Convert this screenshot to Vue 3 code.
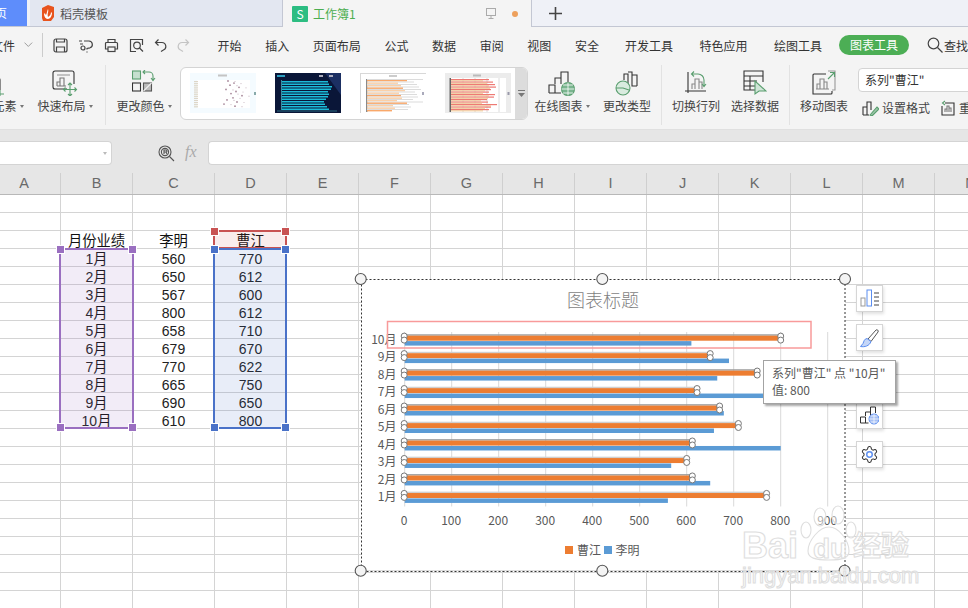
<script setup>
const months = ['1月', '2月', '3月', '4月', '5月', '6月', '7月', '8月', '9月', '10月']
const liming = [560, 650, 567, 800, 658, 679, 770, 665, 690, 610]
const caojiang = [770, 612, 600, 612, 710, 670, 622, 750, 650, 800]

const columns = ['A', 'B', 'C', 'D', 'E', 'F', 'G', 'H', 'I', 'J', 'K', 'L', 'M', 'N']

// sheet cells, row by row, so the table sits in the real grid
const rows = []
for (let r = 0; r < 23; r++) {
  const cells = columns.map(() => null)
  if (r === 2) {
    cells[1] = { cjk: '月份业绩' }
    cells[2] = { cjk: '李明' }
    cells[3] = { cjk: '曹江' }
  }
  if (r > 2 && r < 13) {
    const i = r - 3
    cells[1] = { num: String(i + 1), cjk: '月' }
    cells[2] = { num: String(liming[i]) }
    cells[3] = { num: String(caojiang[i]) }
  }
  rows.push(cells)
}

const X0 = 404.7
const xOf = v => X0 + v * 0.47
const bars = months.map((m, i) => {
  const top = 335.7 + 17.48 * (9 - i)
  return { m, top, a: xOf(caojiang[i]), b: xOf(liming[i]), dark: i % 2 === 1 }
})
const ticks = [0, 100, 200, 300, 400, 500, 600, 700, 800, 900]

const thumbA = [38, 44, 40, 49, 36, 46, 41, 52, 43, 37, 47, 34, 45]
const thumbB = [46, 47, 50, 49, 46, 47, 46, 44, 42, 43, 45, 47]
const thumbC = [46, 37, 40, 42, 44, 38, 40, 41, 36, 46, 32, 34, 31]
const thumbD = [36, 40, 42, 43, 38, 36, 42, 41, 34, 35, 44, 38, 36]

const handles = [
  [360.7, 279], [602.3, 279], [845, 279],
  [360.7, 570.7], [602.3, 570.7], [844.6, 570.7]
]
</script>

<template>
  <div class="page">
    <div class="tabs">
      <div class="tab-home"><span>页</span></div>
      <div class="tab-doc">
        <svg width="14" height="16" viewBox="0 0 14 16"><path d="M1 3l6-3 6 2v10l-3 4H2l-1-3z" fill="#e8541e"/><path d="M7 4c1 3-1 4 0 8 2-1 3-3 3-5l1 1c0 3-2 6-4 6s-4-2-4-5l1-1c0 1 1 2 1 2 1-2 1-4 2-6z" fill="#fff"/></svg>
        <span>稻壳模板</span>
      </div>
      <div class="tab-active">
        <div class="s-logo">S</div>
        <span class="book">工作簿1</span>
        <svg class="monitor" width="12" height="13" viewBox="0 0 12 13" fill="none" stroke="#aaa"><rect x="1.5" y="1.5" width="9" height="7" /><path d="M6 9v2.5M3.5 11.5h5"/></svg>
        <i class="dot"></i>
      </div>
      <div class="plus">
        <svg width="13" height="13" viewBox="0 0 13 13"><path d="M6.5 0v13M0 6.5h13" stroke="#444" stroke-width="1.6"/></svg>
      </div>
    </div>

    <div class="menu">
      <span class="file">文件</span>
      <svg class="chev" width="9" height="6" viewBox="0 0 9 6" fill="none" stroke="#999"><path d="M.5.5l4 4 4-4"/></svg>
      <i class="menu-sep"></i>
      <div class="quick">
        <svg width="15" height="15" viewBox="0 0 15 15" fill="none" stroke="#444" stroke-width="1.2"><rect x="1" y="1" width="13" height="13" rx="2"/><path d="M3.500 1v3h8V1M3.500 14V9h8v5"/></svg>
        <svg width="16" height="15" viewBox="0 0 16 15" fill="none" stroke="#444" stroke-width="1.2"><path d="M6 3h5a3.500 3.500 0 0 1 1 6.800l-3 .7v1M1 3h3M2 6h3M9 13.500v1"/><circle cx="5" cy="10" r="2"/></svg>
        <svg width="15" height="15" viewBox="0 0 15 15" fill="none" stroke="#444" stroke-width="1.2"><path d="M4 5V1.500h7V5M4 11H1.500V5.500a1 1 0 0 1 1-1h10a1 1 0 0 1 1 1V11H11"/><rect x="4" y="9" width="7" height="4.500"/></svg>
        <svg width="15" height="15" viewBox="0 0 15 15" fill="none" stroke="#444" stroke-width="1.2"><path d="M7 13.500H1.500v-12h12V7"/><circle cx="8" cy="7.500" r="3.300"/><path d="M10.500 10l3.500 3.500"/></svg>
        <svg width="13" height="15" viewBox="0 0 13 15" fill="none" stroke="#444" stroke-width="1.2"><path d="M4.500 1.500l-3 3 3 3M1.500 4.500h6a4 4 0 0 1 1.500 7.800L7 13.500"/></svg>
        <svg width="13" height="15" viewBox="0 0 13 15" fill="none" stroke="#c4c4c4" stroke-width="1.2"><path d="M8.500 1.500l3 3-3 3M11.500 4.500h-6a4 4 0 0 0-1.500 7.800l2 1.200"/></svg>
      </div>
      <div class="menu-a">
        <span>开始</span><span>插入</span><span>页面布局</span><span>公式</span><span>数据</span><span>审阅</span><span>视图</span><span>安全</span>
      </div>
      <div class="menu-b">
        <span>开发工具</span><span>特色应用</span><span>绘图工具</span>
      </div>
      <span class="pill">图表工具</span>
      <div class="find">
        <svg width="16" height="16" viewBox="0 0 16 16" fill="none" stroke="#444" stroke-width="1.2"><circle cx="6.500" cy="6.500" r="5.300"/><path d="M10.500 10.500l5 5"/></svg>
        <span>查找</span>
      </div>
    </div>

    <div class="ribbon">
      <div class="tool t-elem">
        <svg width="56" height="26" viewBox="0 0 56 26" fill="none" stroke="#333" stroke-width="1.1"><path d="M20 8h10a2 2 0 0 1 2 2v10"/><path d="M32 20v8M28 24h8" stroke="#5a9e6f"/></svg>
        <span class="label">添加元素<i class="caret"></i></span>
      </div>
      <div class="tool t-layout">
        <svg width="26" height="26" viewBox="0 0 26 26" fill="none" stroke="#333" stroke-width="1.1"><path d="M15 19H3a2 2 0 0 1-2-2V3a2 2 0 0 1 2-2h17a2 2 0 0 1 2 2v11"/><path d="M5 5h13" stroke="#999"/><path d="M5 16v-4h3v4M8 16V8h4v8M5 16h9" stroke="#777"/><path d="M18 13v13M11.500 19.500h13M16 15l2-2 2 2M16 24l2 2 2-2M13.500 17.500l-2 2 2 2M22.500 17.500l2 2-2 2" stroke="#5a9e6f"/></svg>
        <span class="label">快速布局<i class="caret"></i></span>
      </div>
      <i class="sep s-a"></i>
      <div class="tool t-color">
        <svg width="24" height="26" viewBox="0 0 24 26" fill="none" stroke-width="1.1"><rect x=".5" y="1" width="8" height="8" fill="#c6e0cf" stroke="#5a9e6f"/><rect x=".5" y="13" width="8" height="8" stroke="#333"/><rect x="11.500" y="13" width="8" height="8" fill="#bbb" stroke="#555"/><path d="M11.500 21l8-8" stroke="#eee"/><path d="M11 2h6a4 4 0 0 1 4 4v4M19 8l2 2.500L23 8M13 0l-2 2 2 2" stroke="#5a9e6f"/></svg>
        <span class="label">更改颜色<i class="caret"></i></span>
      </div>
      <div class="gallery">
        <div class="thumbs">
          <svg width="66" height="40" viewBox="0 0 66 40">
            <rect width="66" height="40" fill="#f4fbff"/>
            <rect x="7" y="7" width="53" height="28" fill="#fff"/>
            <rect x="28" y="1.500" width="9" height="2" fill="#c4c4c4"/>
            <rect x="64" y="19" width="2" height="3" fill="#8aa"/>
            <g v-for="(v, i) in thumbA" :key="i">
              <rect x="4" :y="8 + i * 2.100" width="4" height="1.200" fill="#ddd6c8"/>
              <circle :cx="v" :cy="8 + i * 2.100" r=".9" fill="#a8889a"/>
              <circle :cx="v + 7" :cy="8.500 + i * 2.100" r=".6" fill="#c9b8c2"/>
            </g>
          </svg>
          <svg width="66" height="40" viewBox="0 0 66 40">
            <rect width="66" height="40" fill="#0a1638"/>
            <path d="M50 0h16v22z" fill="#1b2f62"/>
            <rect x="2" y="2" width="8" height="2" fill="#2b9ec0"/>
            <rect x="44" y="2" width="4" height="2" fill="#aab"/>
            <rect x="54" y="2" width="4" height="2" fill="#aab"/>
            <rect v-for="(v, i) in thumbB" :key="i" x="7" :y="8 + i * 2.500" :width="v" height="1.500" fill="#1bbcd8"/>
            <rect x="6" y="7" width="1" height="30" fill="#3a8aa0"/>
            <rect x="2" y="37.500" width="60" height="1" fill="#2a6a80"/>
          </svg>
          <svg width="66" height="40" viewBox="0 0 66 40">
            <rect width="66" height="40" fill="#fff"/>
            <rect width="66" height="1" fill="#d8d8d8"/>
            <rect width="1" height="40" fill="#d8d8d8"/>
            <rect x="6" y="6" width="1.500" height="33" fill="#8a8a8a"/>
            <rect x="29" y="2" width="8" height="2" fill="#ccc"/>
            <rect x="62" y="19" width="2" height="3" fill="#aab"/>
            <g v-for="(v, i) in thumbC" :key="i">
              <rect x="7" :y="6 + i * 2.500" :width="v + 10" height="1" fill="#dcdcdc"/>
              <rect x="7" :y="7 + i * 2.500" :width="v - 6" height="1.400" :fill="i % 3 === 0 ? '#f9a86a' : '#fbd0a8'"/>
            </g>
          </svg>
          <svg width="66" height="40" viewBox="0 0 66 40">
            <rect width="66" height="40" fill="#ececec"/>
            <rect x="5" y="5" width="56" height="34" fill="#fff"/>
            <rect x="28" y="1.500" width="8" height="2" fill="#bbb"/>
            <rect x="62.500" y="19" width="2" height="3" fill="#99a"/>
            <path d="M18 5v34M30 5v34M42 5v34M54 5v34" stroke="#dcdcdc"/>
            <rect x="4.500" y="5" width="1.500" height="34" fill="#666"/>
            <g v-for="(v, i) in thumbD" :key="i">
              <rect x="6" :y="6 + i * 2.500" :width="v + 2" height="1.200" fill="#ee7a74"/>
              <rect x="6" :y="7.200 + i * 2.500" :width="v - 4" height="1.200" fill="#f0cda0"/>
            </g>
          </svg>
        </div>
        <div class="more">
          <svg width="7" height="7" viewBox="0 0 7 7"><path d="M0 .5h7" stroke="#777"/><path d="M0 3h7L3.500 7z" fill="#777"/></svg>
        </div>
      </div>
      <div class="tool t-online">
        <svg width="28" height="26" viewBox="0 0 28 26" fill="none" stroke="#333" stroke-width="1.1"><path d="M1 23v-8h6v8M7 14V8h6v6M13 10V2h7v12M1 23h12"/><circle cx="20" cy="19" r="6.500" fill="#7ab58f" stroke="#5a9e6f"/><path d="M13.500 19h13M20 12.500v13M15 15h10M15 23h10" stroke="#fff" stroke-width=".8"/></svg>
        <span class="label">在线图表<i class="caret"></i></span>
      </div>
      <div class="tool t-type">
        <svg width="24" height="26" viewBox="0 0 24 26" fill="none" stroke="#333" stroke-width="1.1"><path d="M9 10V4h4v12M13 2h4v14h5"/><path d="M17 5h5v11"/><circle cx="8" cy="18" r="7" fill="#d9ebdf" stroke="#5a9e6f"/><path d="M1 18h7l6 2" stroke="#5a9e6f"/></svg>
        <span class="label">更改类型</span>
      </div>
      <i class="sep s-b"></i>
      <div class="tool t-switch">
        <svg width="22" height="26" viewBox="0 0 22 26" fill="none" stroke="#333" stroke-width="1.1"><path d="M3 2v21M0 21h21"/><path d="M7 19v-5h3v5M10 19V9h4v10M14 19v-7h3v7" stroke="#888"/><path d="M7 4h6a6 6 0 0 1 6 6v6M17 14l2 2.500 2-2.500M9 1.500L6.500 4 9 6.500" stroke="#5a9e6f"/></svg>
        <span class="label">切换行列</span>
      </div>
      <div class="tool t-select">
        <svg width="24" height="26" viewBox="0 0 24 26" fill="none" stroke="#333" stroke-width="1.100"><path d="M12 20H1V1h19v11M1 6h19M1 11h13M1 16h11M7 6v14"/><path d="M12 11v13l4-3h7z" fill="#cfe5d7" stroke="#5a9e6f"/></svg>
        <span class="label">选择数据</span>
      </div>
      <i class="sep s-c"></i>
      <div class="tool t-move">
        <svg width="24" height="26" viewBox="0 0 24 26" fill="none" stroke="#333" stroke-width="1.100"><path d="M14 4H2a1 1 0 0 0-1 1v19h18a1 1 0 0 0 1-1v-2"/><path d="M16 1h7v19h-3" stroke="#999"/><path d="M5 19v-5h3v5M8 19V9h4v10M12 19v-7h3v7M4 19h13" stroke="#888"/><path d="M16 9l6-6M18 2.500h4.500V7" stroke="#5a9e6f"/></svg>
        <span class="label">移动图表</span>
      </div>
      <div class="right-col">
        <div class="series-box">系列"曹江"</div>
        <div class="fmt">
          <svg width="17" height="16" viewBox="0 0 17 16" fill="none" stroke="#333" stroke-width="1.100"><path d="M1 15V7h4v8M5 15V2h4v8M1 15h6"/><path d="M8 15l7-8 2 2-7 7z" fill="#9cc7a9" stroke="#5a9e6f"/></svg>
          <span>设置格式</span>
          <svg class="reset" width="16" height="16" viewBox="0 0 16 16" fill="none" stroke="#333" stroke-width="1.100"><path d="M5 3h9v12H2V6"/><path d="M5 12V9h2v3M7 12V6h2v6M9 12V8h2v4" stroke="#777"/><path d="M5 1L2.500 3 5 5" stroke="#5a9e6f"/></svg>
          <span>重</span>
        </div>
      </div>
    </div>

    <div class="formula">
      <div class="namebox"><i class="caret light"></i></div>
      <svg class="fx-zoom" width="17" height="17" viewBox="0 0 17 17" fill="none" stroke="#555" stroke-width="1.100"><circle cx="7" cy="7" r="6"/><circle cx="7" cy="7" r="3.600"/><path d="M6 9V5h2a1 1 0 0 1 0 2H6M8 7l1 2M11.500 11.500l4.500 4.500"/></svg>
      <span class="fx">fx</span>
      <div class="fbox"></div>
    </div>

    <div class="head">
      <div v-for="c in columns" :key="c" class="hcell">{{ c }}</div>
    </div>

    <div class="sheet">
      <div class="grid">
        <template v-for="(cells, r) in rows" :key="r">
          <div v-for="(cell, c) in cells" :key="c" class="cell">
            <template v-if="cell"><span v-if="cell.num" class="num">{{ cell.num }}</span>{{ cell.cjk }}</template>
          </div>
        </template>
      </div>

      <div class="range purple"><i class="h tl"></i><i class="h tr"></i><i class="h bl"></i><i class="h br"></i></div>
      <div class="range red"><i class="h tl"></i><i class="h tr"></i></div>
      <div class="range blue"><i class="h tl"></i><i class="h tr"></i><i class="h bl"></i><i class="h br"></i></div>

      <svg class="chart" width="618" height="338" viewBox="350 270 618 338">
        <rect x="362" y="280" width="483" height="291" fill="#fff"/>
        <path d="M362 570.500H845" stroke="#ddd" fill="none"/>
        <rect x="361.500" y="279.500" width="483.500" height="292" fill="none" stroke="#333" stroke-dasharray="2 2"/>
        <text x="603" y="307" class="c-title" text-anchor="middle">图表标题</text>

        <line v-for="t in ticks" :key="t" :x1="xOf(t)" :x2="xOf(t)" y1="332" y2="506.500" stroke="#d9d9d9"/>

        <g v-for="b in bars" :key="b.m">
          <rect :x="X0" :y="b.top - 1.400" :width="b.a - X0" height="1.400" :fill="b.dark ? '#9a9a9a' : '#cfcfcf'"/>
          <rect :x="X0" :y="b.top" :width="b.a - X0" height="5" fill="#ed7d31"/>
          <rect :x="X0" :y="b.top + 5.400" :width="b.b - X0" height="4.500" fill="#5b9bd5"/>
          <text x="396.500" :y="b.top + 8" class="c-label" text-anchor="end">{{ b.m }}</text>
          <circle :cx="X0 - .5" :cy="b.top + .4" r="3" class="pt"/>
          <circle :cx="X0 - .5" :cy="b.top + 4.400" r="3" class="pt"/>
          <circle :cx="b.a" :cy="b.top + .4" r="3" class="pt"/>
          <circle :cx="b.a" :cy="b.top + 4.400" r="3" class="pt"/>
        </g>

        <text v-for="t in ticks" :key="'l' + t" :x="xOf(t) - .5" y="525" class="c-label" text-anchor="middle">{{ t }}</text>

        <rect x="565" y="546" width="8" height="8" fill="#ed7d31"/>
        <text x="577" y="554.500" class="c-label">曹江</text>
        <rect x="604" y="546" width="8" height="8" fill="#5b9bd5"/>
        <text x="615.500" y="554.500" class="c-label">李明</text>

        <rect x="387.500" y="321.500" width="423.500" height="26.500" fill="none" stroke="#f89a9a" stroke-width="1.500"/>

        <circle v-for="(p, i) in handles" :key="i" :cx="p[0]" :cy="p[1]" r="5.500" fill="#f4f4f4" stroke="#555" stroke-width="1.100"/>
      </svg>

      <div class="side">
        <div class="side-btn">
          <svg width="19" height="19" viewBox="0 0 19 19" fill="none"><rect x="1" y="9" width="4" height="8" stroke="#999"/><rect x="7" y="1" width="4.500" height="16" stroke="#5b8def"/><path d="M14 4h5M14 8h5M14 12h5M14 16h5" stroke="#444"/></svg>
        </div>
        <div class="side-btn">
          <svg width="20" height="20" viewBox="0 0 20 20" fill="none"><path d="M8 11l8-9c1-.800 3 .5 2 2l-7 9.500z" fill="#fff" stroke="#555"/><path d="M7 10.500c-3 .5-3 3-4 5l-2.500 3c4 .8 9-.5 10.500-5z" fill="#c5d6f7" stroke="#5b8def"/></svg>
        </div>
        <div class="side-btn">
          <svg width="18" height="18" viewBox="0 0 18 18" fill="none" stroke="#555"><path d="M1 2h16l-6 7v7l-4-2V9z"/></svg>
        </div>
        <div class="side-btn">
          <svg width="19" height="19" viewBox="0 0 19 19" fill="none" stroke="#333"><path d="M.5 17v-6h5v6M5.500 10V6h5v5M10.500 7V1h5v6M.5 17h8"/><circle cx="14" cy="13" r="5" fill="#a7c0f4" stroke="#5b8def"/><path d="M9 13h10M14 8v10M10.500 10h7M10.500 16h7" stroke="#fff" stroke-width=".7"/></svg>
        </div>
        <div class="side-btn">
          <svg width="19" height="19" viewBox="0 0 24 24" fill="none"><path d="M12.220 2h-.44a2 2 0 0 0-2 2v.18a2 2 0 0 1-1 1.730l-.43.25a2 2 0 0 1-2 0l-.15-.08a2 2 0 0 0-2.730.73l-.22.38a2 2 0 0 0 .73 2.730l.15.1a2 2 0 0 1 1 1.720v.51a2 2 0 0 1-1 1.740l-.15.09a2 2 0 0 0-.73 2.730l.22.38a2 2 0 0 0 2.730.73l.15-.08a2 2 0 0 1 2 0l.43.25a2 2 0 0 1 1 1.730V20a2 2 0 0 0 2 2h.44a2 2 0 0 0 2-2v-.18a2 2 0 0 1 1-1.730l.43-.25a2 2 0 0 1 2 0l.15.08a2 2 0 0 0 2.730-.73l.22-.39a2 2 0 0 0-.73-2.730l-.15-.08a2 2 0 0 1-1-1.740v-.5a2 2 0 0 1 1-1.740l.15-.09a2 2 0 0 0 .73-2.730l-.22-.38a2 2 0 0 0-2.730-.73l-.15.08a2 2 0 0 1-2 0l-.43-.25a2 2 0 0 1-1-1.730V4a2 2 0 0 0-2-2z" stroke="#333" stroke-width="1.300"/><circle cx="12" cy="12" r="3.500" stroke="#5b8def" stroke-width="1.800"/></svg>
        </div>
      </div>

      <div class="tip">
        <div>系列"曹江" 点 "10月"</div>
        <div>值: 800</div>
      </div>

      <svg class="mark" width="200" height="100" viewBox="735 505 200 100">
        <g fill="#fff" fill-opacity=".5" stroke="#dedede" stroke-width="1.100">
          <ellipse cx="820" cy="517" rx="6" ry="9"/>
          <ellipse cx="838" cy="515" rx="6" ry="9"/>
          <ellipse cx="851" cy="530" rx="5" ry="8"/>
          <ellipse cx="806" cy="530" rx="5" ry="8"/>
          <path d="M829 527c10 0 20 14 20 24 0 7-6 9-20 9s-21-2-21-9c0-10 11-24 21-24z"/>
          <text x="742" y="558" class="wm-big">Bai</text>
          <text x="813" y="558" class="wm-du">du</text>
          <text x="853" y="556" class="wm-cjk">经验</text>
          <text x="742" y="583" class="wm-url">jingyan.baidu.com</text>
        </g>
      </svg>
    </div>
  </div>
</template>

<style>
html, body { margin: 0; padding: 0; background: #fff; }
</style>

<style scoped>
.page {
  width: 968px;
  height: 608px;
  overflow: hidden;
  display: flex;
  flex-direction: column;
  font-family: "Noto Sans CJK SC", sans-serif;
  font-size: 12px;
  color: #333;
}

/* tab strip */
.tabs {
  height: 27px;
  flex: none;
  display: flex;
  background: #eff1f7;
  box-sizing: border-box;
  border-bottom: 1px solid #c3c7d3;
}
.tab-home {
  width: 27px;
  background: #5e8dfb;
  color: #fff;
  overflow: hidden;
  line-height: 26px;
}
.tab-home span { margin-left: -5px; display: block; }
.tab-doc {
  margin-left: 3px;
  width: 253px;
  height: 26px;
  box-sizing: border-box;
  background: #e3e7f1;
  border-right: 1px solid #c3c7d3;
  display: flex;
  align-items: center;
  gap: 5px;
  padding-left: 11px;
  color: #555;
}
.tab-active {
  width: 249px;
  height: 27px;
  box-sizing: border-box;
  background: #f4f4f4;
  border-right: 1px solid #c3c7d3;
  display: flex;
  align-items: center;
  padding-left: 9px;
}
.s-logo {
  width: 16px;
  height: 16px;
  background: #2dbd82;
  color: #fff;
  font-size: 12px;
  line-height: 16px;
  text-align: center;
  border-radius: 1px;
}
.book { margin-left: 5px; width: 172px; color: #4cae50; }
.monitor { margin-right: 15px; }
.dot { width: 6px; height: 6px; border-radius: 50%; background: #eda05c; }
.plus { margin-left: 17px; display: flex; align-items: center; height: 26px; }

/* menu row */
.menu {
  height: 36px;
  flex: none;
  box-sizing: border-box;
  background: #f4f4f4;
  display: flex;
  align-items: center;
  white-space: nowrap;
}
.file { margin-left: -9px; }
.chev { margin-left: 9px; }
.menu-sep { width: 1px; height: 24px; background: #ccc; margin-left: 9px; }
.quick { display: flex; align-items: center; gap: 10px; margin-left: 10px; width: 140px; }
.menu-a { display: flex; gap: 23.600px; margin-left: 28px; }
.menu-b { display: flex; gap: 26.500px; margin-left: 26px; }
.pill {
  margin-left: 17px;
  width: 73px;
  height: 20px;
  line-height: 20px;
  text-align: center;
  border-radius: 10px;
  background: #4cae55;
  color: #fff;
}
.find { margin-left: 18px; display: flex; align-items: center; gap: 1px; }

/* ribbon */
.ribbon {
  height: 67px;
  flex: none;
  box-sizing: border-box;
  background: #f4f4f4;
  border-bottom: 1px solid #e0e0e0;
  display: flex;
  white-space: nowrap;
  color: #444;
}
.tool {
  display: flex;
  flex-direction: column;
  align-items: center;
  padding-top: 7px;
  flex: none;
}
.tool svg { flex: none; }
.label { margin-top: 1px; line-height: 18px; display: flex; align-items: center; }
.caret {
  display: block;
  width: 0;
  height: 0;
  margin-left: 3px;
  border-left: 2.500px solid transparent;
  border-right: 2.500px solid transparent;
  border-top: 3px solid #777;
}
.caret.light { border-top-color: #bbb; margin: 0; }
.t-elem { margin-left: -32px; width: 56px; }
.t-layout { margin-left: 13px; width: 56px; }
.t-color { margin-left: 10px; width: 56px; }
.t-online { margin-left: 6px; width: 56px; }
.t-type { margin-left: 13px; width: 48px; }
.t-switch { margin-left: 10px; width: 48px; }
.t-select { margin-left: 11px; width: 48px; }
.t-move { margin-left: 10px; width: 48px; }
.sep { width: 1px; height: 60px; background: #e2e2e2; margin-top: 2px; flex: none; }
.s-a { margin-left: 12px; }
.s-b { margin-left: 10px; }
.s-c { margin-left: 10px; }
.gallery {
  margin: 4px 0 0 8px;
  width: 348px;
  height: 53px;
  box-sizing: border-box;
  flex: none;
  background: #fff;
  border: 1px solid #d4d4d4;
  border-radius: 6px;
  display: flex;
  overflow: hidden;
}
.thumbs { flex: 1; display: flex; gap: 19px; padding: 5px 0 0 9px; }
.thumbs svg { flex: none; }
.more {
  width: 12px;
  background: #dcdcdc;
  display: flex;
  align-items: center;
  justify-content: center;
}
.right-col { margin-left: 10px; flex: none; width: 120px; }
.series-box {
  margin-top: 5px;
  width: 130px;
  height: 24px;
  line-height: 22px;
  box-sizing: border-box;
  background: #fff;
  border: 1px solid #d4d4d4;
  border-radius: 4px;
  padding-left: 6px;
  color: #333;
}
.fmt { display: flex; align-items: center; gap: 3px; margin: 7px 0 0 4px; line-height: 18px; }
.reset { margin-left: 7px; }

/* formula bar */
.formula {
  height: 35px;
  flex: none;
  box-sizing: border-box;
  background: #e6e6e6;
  display: flex;
  align-items: flex-start;
  padding-top: 11px;
}
.namebox {
  width: 112px;
  height: 24px;
  box-sizing: border-box;
  background: #fff;
  border: 1px solid #d4d4d4;
  border-left: none;
  border-radius: 0 4px 4px 0;
  display: flex;
  align-items: center;
  justify-content: flex-end;
  padding-right: 4px;
}
.fx-zoom { margin: 4px 0 0 46px; flex: none; }
.fx {
  margin: 1px 0 0 10px;
  width: 23px;
  font-family: "Liberation Serif", serif;
  font-style: italic;
  font-size: 16px;
  line-height: 20px;
  color: #aaa;
}
.fbox {
  flex: 1;
  height: 24px;
  box-sizing: border-box;
  background: #fff;
  border: 1px solid #d4d4d4;
  border-right: none;
  border-radius: 4px 0 0 4px;
}

/* column letters */
.head {
  height: 30px;
  flex: none;
  box-sizing: border-box;
  display: grid;
  grid-template-columns: 73px 72px 82px 72px repeat(10, 72px);
  padding-top: 8px;
  margin-left: -12px;
  background: #e6e6e6;
  border-bottom: 1px solid #b8b8b8;
  width: 1040px;
}
.hcell {
  box-sizing: border-box;
  border-right: 1px solid #cfcfcf;
  text-align: center;
  line-height: 21px;
  font-family: "Liberation Sans", sans-serif;
  font-size: 14.500px;
  color: #6a6a6a;
}

/* cells */
.sheet { position: relative; flex: 1; overflow: hidden; }
.grid {
  display: grid;
  grid-template-columns: 73px 72px 82px 72px repeat(10, 72px);
  grid-auto-rows: 18px;
  margin-left: -12px;
  width: 1040px;
}
.cell {
  box-sizing: border-box;
  border-right: 1px solid #d4d4d4;
  border-bottom: 1px solid #d4d4d4;
  text-align: center;
  line-height: 18px;
  font-size: 14.300px;
  color: #111;
  white-space: nowrap;
}
.num { font-family: "Liberation Sans", sans-serif; font-size: 14px; color: #222; }

/* data ranges on the sheet */
.range { position: absolute; box-sizing: border-box; border: 2px solid; pointer-events: none; }
.purple { left: 59px; top: 53px; width: 75px; height: 181px; border-color: #9a6fc0; background: rgba(154, 111, 192, .13); }
.red { left: 213px; top: 35px; width: 74px; height: 19px; border-color: #c85353; background: rgba(200, 83, 83, .11); }
.blue { left: 213px; top: 53px; width: 74px; height: 181px; border-color: #4a72c8; background: rgba(74, 114, 200, .13); }
.h {
  position: absolute;
  width: 7px;
  height: 7px;
  box-sizing: border-box;
  outline: 1px solid #fff;
}
.purple .h { background: #9a6fc0; }
.red .h { background: #c85353; }
.blue .h { background: #4a72c8; }
.tl { left: -4px; top: -4px; }
.tr { right: -4px; top: -4px; }
.bl { left: -4px; bottom: -4px; }
.br { right: -4px; bottom: -4px; }

/* chart */
.chart { position: absolute; left: 350px; top: 75px; }
.c-title { font-size: 18px; font-weight: 300; fill: #7f7f7f; }
.c-label { font-size: 12px; fill: #595959; }
.pt { fill: #fff; stroke: #777; stroke-width: 1; }

.side {
  position: absolute;
  left: 856px;
  top: 90px;
  display: flex;
  flex-direction: column;
  gap: 12px;
}
.side-btn {
  width: 27px;
  height: 27px;
  box-sizing: border-box;
  background: #fff;
  border: 1px solid #d6d6d6;
  box-shadow: 1px 2px 3px rgba(0, 0, 0, .12);
  display: flex;
  align-items: center;
  justify-content: center;
}
.tip {
  position: absolute;
  left: 763px;
  top: 165px;
  width: 133px;
  height: 44px;
  box-sizing: border-box;
  background: #fff;
  border: 1px solid #a3a3a3;
  box-shadow: 2px 2px 2px rgba(0, 0, 0, .35);
  padding: 3px 0 0 8px;
  line-height: 17px;
  color: #595959;
  white-space: nowrap;
}
.mark { position: absolute; left: 735px; top: 310px; pointer-events: none; }
.wm-big { font: 700 36px "Liberation Sans", sans-serif; }
.wm-du { font: 700 28px "Liberation Sans", sans-serif; }
.wm-cjk { font: 700 28px "Noto Sans CJK SC", sans-serif; }
.wm-url { font: 400 22px "Liberation Sans", sans-serif; }
</style>
